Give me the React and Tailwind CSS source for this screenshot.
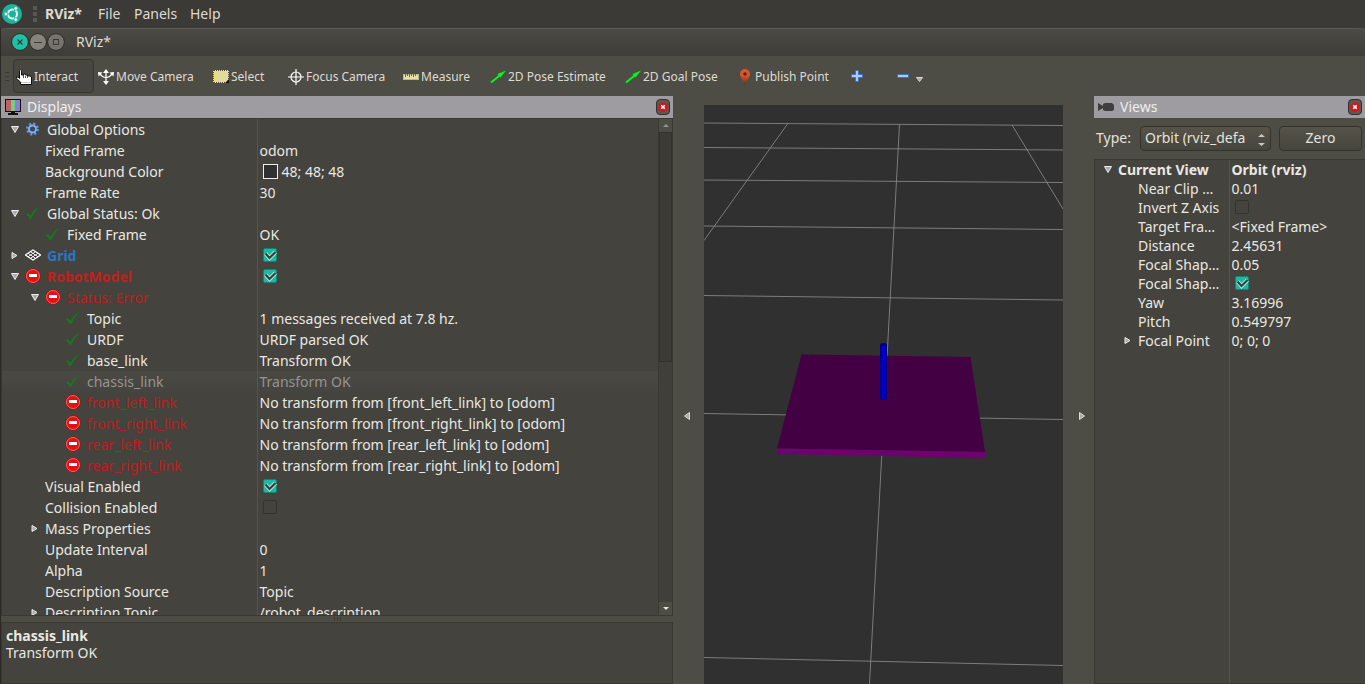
import { useState } from "react";

const displayRows = [
  { depth: 0, arrow: "down", icon: "gear", name: "Global Options" },
  { depth: 1, name: "Fixed Frame", value: "odom" },
  { depth: 1, name: "Background Color", value: "48; 48; 48", swatch: true },
  { depth: 1, name: "Frame Rate", value: "30" },
  { depth: 0, arrow: "down", icon: "ok", name: "Global Status: Ok" },
  { depth: 1, icon: "ok", name: "Fixed Frame", value: "OK" },
  { depth: 0, arrow: "right", icon: "grid", name: "Grid", tone: "font-bold text-[#2a76c6]", checked: true },
  { depth: 0, arrow: "down", icon: "error", name: "RobotModel", tone: "font-bold text-[#c02020]", checked: true },
  { depth: 1, arrow: "down", icon: "error", name: "Status: Error", tone: "text-[#c01c1c]" },
  { depth: 2, icon: "ok", name: "Topic", value: "1 messages received at 7.8 hz." },
  { depth: 2, icon: "ok", name: "URDF", value: "URDF parsed OK" },
  { depth: 2, icon: "ok", name: "base_link", value: "Transform OK" },
  { depth: 2, icon: "ok", name: "chassis_link", value: "Transform OK", selected: true },
  { depth: 2, icon: "error", name: "front_left_link", tone: "text-[#c01c1c]", value: "No transform from [front_left_link] to [odom]" },
  { depth: 2, icon: "error", name: "front_right_link", tone: "text-[#c01c1c]", value: "No transform from [front_right_link] to [odom]" },
  { depth: 2, icon: "error", name: "rear_left_link", tone: "text-[#c01c1c]", value: "No transform from [rear_left_link] to [odom]" },
  { depth: 2, icon: "error", name: "rear_right_link", tone: "text-[#c01c1c]", value: "No transform from [rear_right_link] to [odom]" },
  { depth: 1, name: "Visual Enabled", checked: true },
  { depth: 1, name: "Collision Enabled", checked: false },
  { depth: 1, arrow: "right", name: "Mass Properties" },
  { depth: 1, name: "Update Interval", value: "0" },
  { depth: 1, name: "Alpha", value: "1" },
  { depth: 1, name: "Description Source", value: "Topic" },
  { depth: 1, arrow: "right", name: "Description Topic", value: "/robot_description" },
];

const viewRows = [
  { name: "Near Clip …", value: "0.01" },
  { name: "Invert Z Axis", checked: false },
  { name: "Target Fra…", value: "<Fixed Frame>" },
  { name: "Distance", value: "2.45631" },
  { name: "Focal Shap…", value: "0.05" },
  { name: "Focal Shap…", checked: true },
  { name: "Yaw", value: "3.16996" },
  { name: "Pitch", value: "0.549797" },
  { name: "Focal Point", value: "0; 0; 0", arrow: "right" },
];

const tools = [
  { label: "Move Camera", icon: MoveIcon, width: "w-[115px]" },
  { label: "Select", icon: SelectIcon, width: "w-[75px]" },
  { label: "Focus Camera", icon: FocusIcon, width: "w-[115px]" },
  { label: "Measure", icon: MeasureIcon, width: "w-[87px]" },
  { label: "2D Pose Estimate", icon: PoseIcon, width: "w-[135px]" },
  { label: "2D Goal Pose", icon: PoseIcon, width: "w-[112px]" },
  { label: "Publish Point", icon: PinIcon, width: "w-[112px]" },
];

function InteractIcon() {
  return (
    <svg width="16" height="16" viewBox="0 0 16 16" className="shrink-0">
      <path d="M3.500 1.500q1-1.500 2 0V6h2V5h2v1h2v1h2.500l1.500 1v7.500H4.500V13L.5 9.500V8h1.500l1.500 1.500z" fill="#fff" stroke="#111" />
      <path d="M7.500 6v3M9.500 7v2M11.500 7v2" stroke="#555" />
      <path d="M5 13.500h9.500" stroke="#ccc" />
    </svg>
  );
}

function MoveIcon() {
  return (
    <svg width="16" height="16" viewBox="0 0 16 16" className="shrink-0" fill="none" stroke="#fff">
      <path d="M8 3v10M2 4.500c1.500 3 4 4 6 4s4.500-1 6-4" strokeWidth="1.300" />
      <path d="M8 0l3 4H5zM8 16l3-4H5zM0 3l4.500.5L.5 7.500zM16 3l-4.500.5L15.500 7.500z" fill="#fff" stroke="none" />
    </svg>
  );
}

function SelectIcon() {
  return (
    <svg width="16" height="16" viewBox="0 0 16 16" className="shrink-0">
      <rect x="1.500" y="2.500" width="13" height="10" fill="#e2dc9a" stroke="#f1e24e" />
      <path d="M.5 2v11M15.500 2v9M2 1.500h13M2 13.500h11" stroke="#e9e0a4" strokeDasharray="1 1" />
      <path d="M16 10v4h-4z" fill="#111" />
    </svg>
  );
}

function FocusIcon() {
  return (
    <svg width="16" height="16" viewBox="0 0 16 16" className="shrink-0" fill="none" stroke="#fff">
      <circle cx="8" cy="8" r="5" strokeWidth="1.200" />
      <path d="M8 0v16M0 8h16" strokeWidth="1.200" />
    </svg>
  );
}

function MeasureIcon() {
  return (
    <svg width="16" height="16" viewBox="0 0 16 16" className="shrink-0">
      <rect x="0.500" y="5.500" width="15" height="5" fill="#e6dfa6" stroke="#bdb78c" />
      <path d="M2.500 5v3M4.500 5v2M6.500 5v3M8.500 5v2M10.500 5v3M12.500 5v2" stroke="#6d6850" />
    </svg>
  );
}

function PoseIcon() {
  return (
    <svg width="16" height="16" viewBox="0 0 16 16" className="shrink-0">
      <path d="M1 13.500L11 5.500" stroke="#00f81c" strokeWidth="2" />
      <path d="M16 1.500L10.500 8.500 7.500 5z" fill="#00f81c" />
    </svg>
  );
}

function PinIcon() {
  return (
    <svg width="16" height="16" viewBox="0 0 16 16" className="shrink-0">
      <defs>
        <linearGradient id="pin" x1="0" y1="0" x2="0" y2="1">
          <stop offset="0.400" stopColor="#e2532d" />
          <stop offset="1" stopColor="#59311c" />
        </linearGradient>
      </defs>
      <path d="M8 0a5 5 0 0 1 5 5c0 4-4 6-4.500 11h-1C7 11 3 9 3 5a5 5 0 0 1 5-5z" fill="url(#pin)" />
      <circle cx="8" cy="5" r="1.800" fill="#4d2a20" />
    </svg>
  );
}

function Arrow({ dir }) {
  return (
    <svg width="10" height="10" viewBox="0 0 10 10" className="shrink-0">
      {dir === "down" && <path d="M1.500 1.500h7L5 7.500z" fill="#aaa" stroke="#eee" />}
      {dir === "right" && <path d="M2 1.500v6L7 4.500z" fill="#aaa" stroke="#eee" />}
    </svg>
  );
}

function RowIcon({ name }) {
  if (name === "ok") {
    return (
      <svg width="16" height="16" viewBox="0 0 16 16" className="shrink-0">
        <path d="M1 9.500Q2.500 7.500 4 9l1.500 2Q9 4.500 14.500 1.500 9.500 6.500 6.500 13.500L4.500 14Q3.500 10.500 1 9.500z" fill="#16791f" />
      </svg>
    );
  }
  if (name === "error") {
    return (
      <svg width="16" height="16" viewBox="0 0 16 16" className="shrink-0">
        <circle cx="8" cy="8" r="7.500" fill="#c80000" />
        <circle cx="8" cy="8" r="6.500" fill="#e21212" stroke="#f08080" strokeWidth="0.800" />
        <rect x="4" y="6" width="8" height="3" fill="#fff" />
      </svg>
    );
  }
  if (name === "gear") {
    return (
      <svg width="16" height="16" viewBox="0 0 16 16" className="shrink-0" fill="none">
        <circle cx="7.500" cy="8" r="5" stroke="#5a93e0" strokeWidth="3" strokeDasharray="2 1.927" />
        <circle cx="7.500" cy="8" r="3.500" stroke="#7fb0ee" strokeWidth="2" />
        <circle cx="7.500" cy="8" r="2.200" fill="#35486a" />
      </svg>
    );
  }
  return (
    <svg width="16" height="16" viewBox="0 0 16 16" className="shrink-0" fill="none" stroke="#fff">
      <path d="M8 3L15.500 8 8 13 .5 8z" fill="#222" strokeWidth="1.200" />
      <path d="M5.500 4.700L13 9.700M3 6.300L10.500 11.300M10.500 4.700L3 9.700M13 6.300L5.500 11.300" />
    </svg>
  );
}

function CheckBox({ initial, label }) {
  const [on, setOn] = useState(initial);

  return (
    <label className="relative mx-[3px] mb-[2px] block size-[14px]">
      <input
        type="checkbox"
        aria-label={label}
        checked={on}
        onChange={() => setOn(!on)}
        className="block size-[14px] appearance-none rounded-xs border border-[#34332f] bg-[#44433e] checked:border-[#128573] checked:bg-[#1cb8a2]"
      />
      {on && (
        <svg width="14" height="14" viewBox="0 0 14 14" className="pointer-events-none absolute inset-0" fill="none">
          <path d="M2.500 5.500L6.500 10 12.500 4" stroke="#b9e9e1" strokeWidth="4" />
          <path d="M2.500 5.500L6.500 10 12.500 4" stroke="#2f403c" strokeWidth="2.200" />
        </svg>
      )}
    </label>
  );
}

function PanelTitle({ icon, title }) {
  return (
    <div className="flex h-[22px] shrink-0 items-center bg-[#9e9ca1] pr-[3px] pl-1">
      {icon}
      <h2 className="ml-[6px] flex-1 text-[14px] leading-5 text-[#eeeef0]">{title}</h2>
      <button aria-label={`Close ${title}`} className="flex h-4 w-[14px] items-center justify-center rounded border border-[#33322e] bg-[#5a5850]">
        <svg width="10" height="10" viewBox="0 0 10 10" className="shrink-0">
          <circle cx="5" cy="5" r="4.800" fill="#d8151c" />
          <path d="M3.200 3.200l3.600 3.600M6.800 3.200L3.200 6.800" stroke="#fff" strokeWidth="1.600" />
        </svg>
      </button>
    </div>
  );
}

function Displays() {
  return (
    <section className="flex w-[672px] shrink-0 flex-col">
      <PanelTitle
        title="Displays"
        icon={
          <svg width="16" height="16" viewBox="0 0 16 16" className="shrink-0">
            <rect width="16" height="13" y="0" fill="#111" />
            <rect x="1" y="1" width="5" height="11" fill="#b96464" />
            <rect x="6" y="1" width="4" height="11" fill="#7cc980" />
            <rect x="10" y="1" width="5" height="11" fill="#8581d6" />
            <path d="M6 13h4v1h3v2H3v-2h3z" fill="#111" />
          </svg>
        }
      />
      <div className="flex min-h-0 flex-1 border border-[#393833] bg-[#44433d]">
        <div className="min-w-0 flex-1 overflow-hidden">
          <table className="w-full table-fixed border-collapse text-[14px] leading-5">
            <colgroup>
              <col className="w-[255px]" />
              <col />
            </colgroup>
            <tbody>
              {displayRows.map((row, i) => (
                <tr key={i} className={row.selected ? "h-[21px] bg-linear-to-b from-[#4a4943] to-[#454440] text-[#969590]" : "h-[21px] text-[#e9e8e3]"}>
                  <td className="border-r border-[#55544e] p-0">
                    <div className="flex h-[21px] items-center pl-2">
                      {row.depth > 0 && <span className={row.depth === 1 ? "w-5 shrink-0" : "w-10 shrink-0"} />}
                      <Arrow dir={row.arrow} />
                      {row.icon && <span className="mr-px ml-[5px] flex pb-[2px]"><RowIcon name={row.icon} /></span>}
                      <span className={`ml-[5px] whitespace-nowrap ${row.tone || ""}`}>{row.name}</span>
                    </div>
                  </td>
                  <td className="p-0 pl-[2px]">
                    <div className="flex h-[21px] items-center whitespace-nowrap">
                      {row.swatch && <span className="mr-1 ml-[3px] size-[15px] border border-[#eee] bg-[#303030]" />}
                      {row.checked !== undefined && <CheckBox initial={row.checked} label={row.name} />}
                      {row.value}
                    </div>
                  </td>
                </tr>
              ))}
            </tbody>
          </table>
        </div>
        <div className="flex w-[14px] shrink-0 flex-col border-l border-[#393833] bg-[#403f3a]">
          <button aria-label="Scroll up" className="flex h-[13px] shrink-0 items-center justify-center bg-[#4d4c45]">
            <svg width="6" height="3" viewBox="0 0 6 3"><path d="M0 3h6L3 0z" fill="#96958f" /></svg>
          </button>
          <div className="h-[230px] border border-[#33322e] bg-[#3c3b36]" />
          <div className="flex-1" />
          <button aria-label="Scroll down" className="flex h-[13px] shrink-0 items-center justify-center bg-[#4d4c45]">
            <svg width="6" height="3" viewBox="0 0 6 3"><path d="M0 0h6L3 3z" fill="#e4e3de" /></svg>
          </button>
        </div>
      </div>
      <div className="flex h-[6px] shrink-0 items-center justify-center gap-[2px]">
        <span className="h-1 w-px bg-[#3a3934]" />
        <span className="h-1 w-px bg-[#3a3934]" />
        <span className="h-1 w-px bg-[#3a3934]" />
      </div>
      <div className="h-[62px] shrink-0 border border-[#393833] bg-[#44433d] px-1 pt-1 text-[14px] leading-[17px] text-[#e9e8e3]">
        <p className="font-bold">chassis_link</p>
        <p>Transform OK</p>
      </div>
    </section>
  );
}

function Scene() {
  return (
    <main className="mt-[9px] min-w-0 flex-1 bg-[#303030]">
      <svg viewBox="704 105 359 579" preserveAspectRatio="xMidYMin slice" className="block size-full">
        <g stroke="#848484" strokeWidth="0.900" fill="none">
          <path d="M704 123L1063 125.500M704 147.500L1063 150M704 180L1063 182.500M704 226L1063 229.500M704 295.500L1063 300M704 413.500L1063 419.500M704 657.500L1063 665.500" />
          <path d="M787.500 124L704 240.500M899.500 124.500L869.500 684M1012 125L1063 209" />
        </g>
        <path d="M801.500 354.500L970.500 357 985 452 777 448.500z" fill="#430043" />
        <path d="M777 448.500L985 452v6L777 454z" fill="#6f0070" />
        <path d="M880 345a3.500 2 0 0 1 7 0v53a3.500 2 0 0 1-7 0z" fill="#00007c" />
        <path d="M881.500 346h4v53h-4z" fill="#0000cf" />
      </svg>
    </main>
  );
}

function Views() {
  return (
    <section className="flex w-[271px] shrink-0 flex-col">
      <PanelTitle
        title="Views"
        icon={
          <svg width="16" height="16" viewBox="0 0 16 16" className="shrink-0" fill="#3f3e3c">
            <path d="M0 4l5 3V5l2-1h7l2 2v5l-2 1H7l-2-1V9l-5 3z" />
          </svg>
        }
      />
      <div className="flex h-[41px] shrink-0 items-center pr-[3px] pb-px pl-[2px] text-[14px] leading-5 text-[#e4e2dc]">
        <label htmlFor="view-type" className="w-11 shrink-0">Type:</label>
        <div className="relative w-[131px] shrink-0">
          <select
            id="view-type"
            className="block h-[25px] w-full appearance-none rounded border border-[#33322d] bg-linear-to-b from-[#555349] to-[#46453e] pr-4 pl-1"
          >
            <option>Orbit (rviz_defa</option>
          </select>
          <svg width="7" height="12" viewBox="0 0 7 12" className="pointer-events-none absolute top-2 right-[6px]" fill="#c9c7c0">
            <path d="M0 3h7L3.500 0zM0 9h7L3.500 12z" />
          </svg>
        </div>
        <button className="ml-2 h-[25px] flex-1 rounded border border-[#33322d] bg-linear-to-b from-[#555349] to-[#46453e]">Zero</button>
      </div>
      <div className="min-h-0 flex-1 border border-r-0 border-[#393833] bg-[#44433d]">
        <table className="h-full w-full table-fixed border-collapse text-[14px] leading-[19px] text-[#e9e8e3]">
          <colgroup>
            <col className="w-[134px]" />
            <col />
          </colgroup>
          <tbody>
            <tr className="h-[19px] font-bold">
              <td className="border-r border-[#55544e] p-0">
                <div className="flex h-[19px] items-center pl-2">
                  <Arrow dir="down" />
                  <span className="ml-[5px]">Current View</span>
                </div>
              </td>
              <td className="p-0 pl-[2px]">Orbit (rviz)</td>
            </tr>
            {viewRows.map((row, i) => (
              <tr key={i} className="h-[19px]">
                <td className="border-r border-[#55544e] p-0">
                  <div className="flex h-[19px] items-center pl-7 whitespace-nowrap">
                    <Arrow dir={row.arrow} />
                    <span className="ml-[5px]">{row.name}</span>
                  </div>
                </td>
                <td className="p-0 pl-[2px]">
                  {row.checked !== undefined ? <CheckBox initial={row.checked} label={row.name} /> : row.value}
                </td>
              </tr>
            ))}
            <tr>
              <td className="border-r border-[#55544e] p-0" />
              <td className="p-0" />
            </tr>
          </tbody>
        </table>
      </div>
    </section>
  );
}

export default function App() {
  return (
    <div className="flex h-screen flex-col overflow-hidden bg-[#4d4c45] font-['Noto_Sans','Open_Sans',sans-serif]">
      <nav className="flex h-7 shrink-0 items-center bg-[#3b3a36] pl-[2px] text-[14px] leading-5 text-[#dfdbd2]">
        <svg width="20" height="20" viewBox="0 0 20 20" className="shrink-0" fill="none">
          <circle cx="10" cy="10" r="10" fill="#1cb39c" />
          <circle cx="10.500" cy="10" r="4.500" stroke="#e8f7f4" strokeWidth="2" />
          <path d="M10.500 10h-7M10.500 10l4-7M10.500 10l4 7" stroke="#1cb39c" strokeWidth="1" />
          <g fill="#e8f7f4" stroke="#1cb39c" strokeWidth="0.800">
            <circle cx="4" cy="10" r="1.900" />
            <circle cx="13.800" cy="4.400" r="1.900" />
            <circle cx="13.800" cy="15.600" r="1.900" />
          </g>
        </svg>
        <div className="ml-[11px] flex flex-col gap-[2px]">
          <span className="size-1 bg-[#585752]" />
          <span className="size-1 bg-[#585752]" />
          <span className="size-1 bg-[#585752]" />
        </div>
        <span className="ml-2 w-[53px] font-bold">RViz*</span>
        <button className="w-9 text-left">File</button>
        <button className="w-14 text-left">Panels</button>
        <button className="text-left">Help</button>
      </nav>

      <div className="flex min-h-0 flex-1 flex-col border-l border-[#2a2926]">
        <header className="flex h-7 shrink-0 items-center rounded-t-md border-t border-[#5b5a54] bg-linear-to-b from-[#4b4a44] to-[#3e3d38] pb-px pl-[11px]">
          <div className="flex gap-[2px]">
            <button aria-label="Close" className="size-4 rounded-full bg-[#1fc0a8] outline outline-[#33322e]">
              <svg width="16" height="16" viewBox="0 0 16 16"><path d="M5.500 5.500l5 5M10.500 5.500l-5 5" stroke="#2b3b37" strokeWidth="1.200" /></svg>
            </button>
            <button aria-label="Minimize" className="size-4 rounded-full bg-[#85837b] outline outline-[#33322e]">
              <svg width="16" height="16" viewBox="0 0 16 16"><path d="M4 8.500h8" stroke="#3a3935" /></svg>
            </button>
            <button aria-label="Maximize" className="size-4 rounded-full bg-[#75736c] outline outline-[#33322e]">
              <svg width="16" height="16" viewBox="0 0 16 16"><rect x="5.500" y="5.500" width="5" height="5" fill="none" stroke="#3a3935" /></svg>
            </button>
          </div>
          <h1 className="ml-3 text-[14px] leading-5 text-[#dfdbd2]">RViz*</h1>
        </header>

        <div className="flex h-10 shrink-0 items-center pl-1 text-[12px] leading-4 text-[#dfdbd2]">
          <div className="flex flex-col gap-[3px]">
            <span className="h-px w-1 bg-[#3a3934]" />
            <span className="h-px w-1 bg-[#3a3934]" />
            <span className="h-px w-1 bg-[#3a3934]" />
          </div>
          <button className="ml-1 flex h-[34px] w-[81px] items-center gap-[2px] rounded border border-[#38372f] bg-[#474640] pt-[2px] pl-[2px]">
            <InteractIcon />
            Interact
          </button>
          <div className="ml-1 flex pt-px">
            {tools.map(({ label, icon: Icon, width }) => (
              <button key={label} className={`flex items-center gap-[2px] whitespace-nowrap ${width}`}>
                <Icon />
                {label}
              </button>
            ))}
          </div>
          <button aria-label="Add tool" className="flex w-4 justify-center">
            <svg width="12" height="12" viewBox="0 0 12 12"><path d="M4.500.5h3v4h4v3h-4v4h-3v-4h-4v-3h4z" fill="#a9ccf5" stroke="#3a73c4" /></svg>
          </button>
          <button aria-label="Remove tool" className="ml-8 flex items-center gap-[7px]">
            <svg width="12" height="12" viewBox="0 0 12 12"><path d="M.5 4.500h11v3H.5z" fill="#a9ccf5" stroke="#3a73c4" /></svg>
            <svg width="7" height="12" viewBox="0 0 7 12"><path d="M.5 7.500h6L3.500 11.500z" fill="#aaa8a0" stroke="#dddbd3" /></svg>
          </button>
        </div>

        <div className="flex min-h-0 flex-1">
          <Displays />
          <button aria-label="Hide left dock" className="mt-[9px] flex w-[31px] shrink-0 items-center pt-[43px] pl-[11px]">
            <svg width="6" height="8" viewBox="0 0 6 8"><path d="M5.500.5v7L.5 4z" fill="#aaa" stroke="#ddd" /></svg>
          </button>
          <Scene />
          <button aria-label="Hide right dock" className="mt-[9px] flex w-[31px] shrink-0 items-center justify-end pt-[43px] pr-[9px]">
            <svg width="6" height="8" viewBox="0 0 6 8"><path d="M.5.5v7L5.500 4z" fill="#aaa" stroke="#ddd" /></svg>
          </button>
          <Views />
        </div>
      </div>
    </div>
  );
}
